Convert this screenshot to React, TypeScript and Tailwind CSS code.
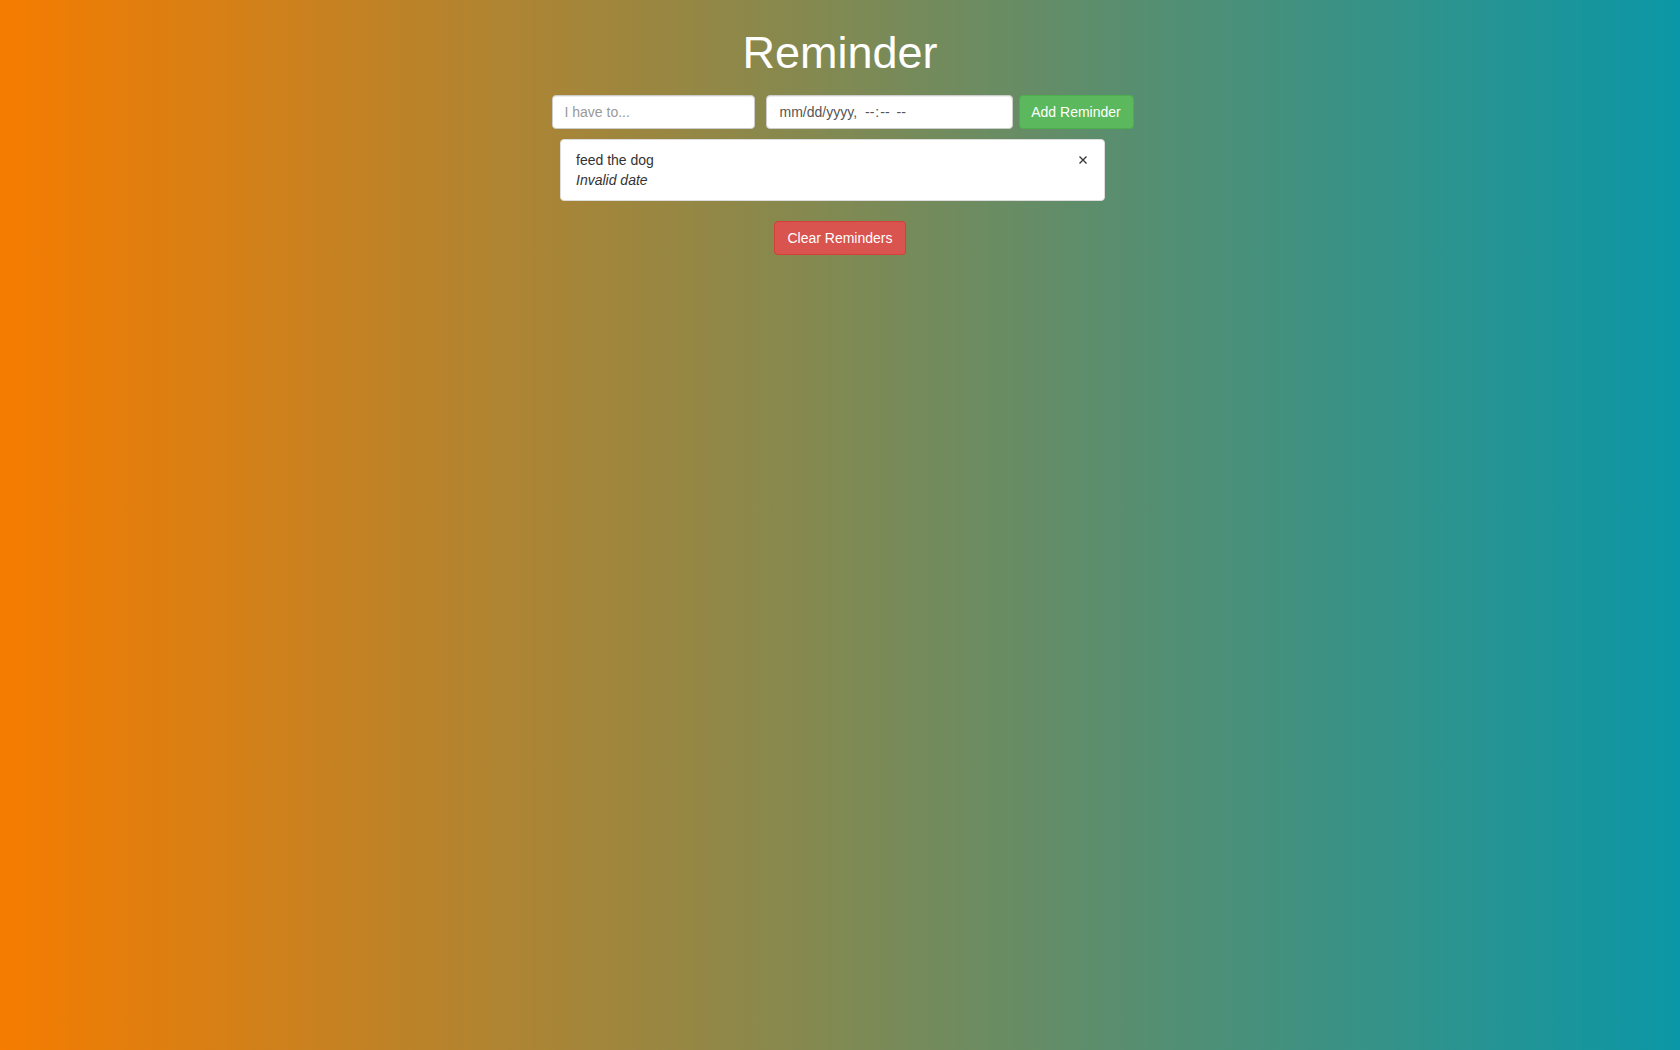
import React from "react";

const reminders = [{ id: 1, text: "feed the dog", due: "Invalid date" }];

const DeleteIcon = () => (
  <svg width="8" height="8" viewBox="0 0 8 8" className="block">
    <path d="M0.5 0.5 L7.5 7.5 M7.5 0.5 L0.5 7.5" stroke="#333" strokeWidth="1.3" />
  </svg>
);

export default function App() {
  return (
    <div className="min-h-screen w-full bg-[linear-gradient(to_right,#f57c00,#0b97a6)] font-['Liberation_Sans',Arial,sans-serif] text-[14px] leading-[20px] text-[#333]">
      <h1 className="pt-[28px] text-center text-[45px] leading-[50px] font-normal text-white">Reminder</h1>

      <div className="mt-[17px] flex justify-center pl-[5px]">
        <input
          className="h-[34px] w-[203px] rounded-[4px] border border-[#ccc] bg-white px-[12px] text-[14px] text-[#555] shadow-[inset_0_1px_1px_rgba(0,0,0,0.075)] outline-none placeholder:text-[#999]"
          placeholder="I have to..."
        />
        <div className="ml-[11px] flex h-[34px] w-[247px] items-center rounded-[4px] border border-[#ccc] bg-white pl-[13px] text-[14px] text-[#555] shadow-[inset_0_1px_1px_rgba(0,0,0,0.075)]">
          <span>mm/dd/yyyy,</span>
          <span className="ml-[8px]">--</span>
          <span className="ml-[1px]">:</span>
          <span className="ml-[1px]">--</span>
          <span className="ml-[7px]">--</span>
        </div>
        <button className="ml-[6px] h-[34px] w-[115px] rounded-[4px] border border-[#4cae4c] bg-[#5cb85c] text-[14px] text-white">
          Add Reminder
        </button>
      </div>

      <div className="mt-[10px] flex justify-center pr-[15px]">
        <ul className="w-[545px]">
          {reminders.map((r) => (
            <li key={r.id} className="flex justify-between rounded-[4px] border border-[#ddd] bg-white px-[15px] py-[10px]">
              <div>
                <div>{r.text}</div>
                <div className="italic">{r.due}</div>
              </div>
              <div className="flex h-[20px] items-center pr-[2px]">
                <DeleteIcon />
              </div>
            </li>
          ))}
        </ul>
      </div>

      <div className="mt-[20px] flex justify-center">
        <button className="h-[34px] rounded-[4px] border border-[#d43f3a] bg-[#d9534f] px-[12px] text-[14px] text-white">
          Clear Reminders
        </button>
      </div>
    </div>
  );
}
